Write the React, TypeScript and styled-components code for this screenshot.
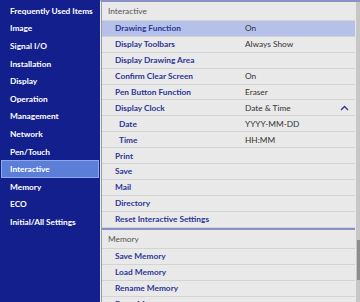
import styled, { createGlobalStyle } from "styled-components";

const Global = createGlobalStyle`
  html, body {
    margin: 0;
    padding: 0;
    overflow: hidden;
    background: #e9e9e9;
  }
  * { box-sizing: border-box; }
`;

const Screen = styled.div`
  width: 360px;
  height: 302px;
  display: flex;
  font-family: Lato, "Noto Sans", sans-serif;
  font-size: 8.3px;
  overflow: hidden;
`;

const Sidebar = styled.nav`
  width: 100px;
  flex: none;
  background: #141f8e;
  padding-top: 2px;
  display: flex;
  flex-direction: column;
`;

const NavItem = styled.div<{ $active?: boolean }>`
  height: 17.6px;
  margin: 0 1px;
  padding-left: 8px;
  display: flex;
  align-items: center;
  color: #fff;
  font-weight: 700;
  white-space: nowrap;
  background: ${(p) => (p.$active ? "#5b7ed8" : "transparent")};
  border: 1px solid ${(p) => (p.$active ? "#8ea6ea" : "transparent")};
`;

const Panel = styled.div`
  flex: 1;
  position: relative;
  border-top: 2px solid #8a90c8;
  border-left: 1px solid #f4f4f4;
  background: #e9e9e9;
  overflow: hidden;
`;

const List = styled.div`
  margin-right: 5px;
  border-left: 1px solid #9297cc;
  display: flex;
  flex-direction: column;
`;

const SectionHead = styled.div<{ $h: number; $line?: boolean }>`
  height: ${(p) => p.$h}px;
  flex: none;
  padding-left: 6px;
  display: flex;
  align-items: center;
  color: #555;
  font-weight: 400;
  border-top: ${(p) => (p.$line ? "2px solid #8a90c8" : "none")};
  border-bottom: 1px solid #d3d3d3;
`;

const Row = styled.div<{ $sel?: boolean; $h?: number }>`
  height: ${(p) => p.$h ?? 16}px;
  flex: none;
  display: flex;
  align-items: center;
  background: ${(p) => (p.$sel ? "#b5c1e8" : "transparent")};
  border-bottom: 1px solid #d3d3d3;
`;

const Label = styled.div<{ $sub?: boolean }>`
  width: 143px;
  padding-left: ${(p) => (p.$sub ? 17 : 13)}px;
  color: #2b3596;
  font-weight: 700;
  white-space: nowrap;
`;

const Value = styled.div`
  flex: 1;
  color: #333;
  font-weight: 400;
  white-space: nowrap;
`;

const Caret = styled.svg`
  width: 9px;
  height: 6px;
  margin-right: 6px;
`;

const Track = styled.div`
  position: absolute;
  right: 0;
  top: 0;
  bottom: 0;
  width: 4px;
  background: #c6c6c6;
`;

const Thumb = styled.div`
  position: absolute;
  right: 0;
  top: 238px;
  height: 40px;
  width: 3px;
  background: #8c8c8c;
`;

const nav = [
  "Frequently Used Items",
  "Image",
  "Signal I/O",
  "Installation",
  "Display",
  "Operation",
  "Management",
  "Network",
  "Pen/Touch",
  "Interactive",
  "Memory",
  "ECO",
  "Initial/All Settings",
];

type Item = { label: string; value?: string; sub?: boolean; caret?: boolean; sel?: boolean };

const interactive: Item[] = [
  { label: "Drawing Function", value: "On", sel: true },
  { label: "Display Toolbars", value: "Always Show" },
  { label: "Display Drawing Area" },
  { label: "Confirm Clear Screen", value: "On" },
  { label: "Pen Button Function", value: "Eraser" },
  { label: "Display Clock", value: "Date & Time", caret: true },
  { label: "Date", value: "YYYY-MM-DD", sub: true },
  { label: "Time", value: "HH:MM", sub: true },
  { label: "Print" },
  { label: "Save" },
  { label: "Mail" },
  { label: "Directory" },
  { label: "Reset Interactive Settings" },
];

const memory: Item[] = [
  { label: "Save Memory" },
  { label: "Load Memory" },
  { label: "Rename Memory" },
  { label: "Erase Memory" },
];

function renderRow(it: Item, h?: number) {
  return (
    <Row key={it.label} $sel={it.sel} $h={h}>
      <Label $sub={it.sub}>{it.label}</Label>
      <Value>{it.value}</Value>
      {it.caret && (
        <Caret viewBox="0 0 9 6">
          <polyline points="1,5 4.5,1.5 8,5" fill="none" stroke="#2b3596" strokeWidth="1.3" />
        </Caret>
      )}
    </Row>
  );
}

export default function App() {
  return (
    <Screen>
      <Global />
      <Sidebar>
        {nav.map((n) => (
          <NavItem key={n} $active={n === "Interactive"}>
            {n}
          </NavItem>
        ))}
      </Sidebar>
      <Panel>
        <List>
          <SectionHead $h={19}>Interactive</SectionHead>
          {interactive.map((it) => renderRow(it, 15.9))}
          <SectionHead $h={21} $line>
            Memory
          </SectionHead>
          {memory.map((it) => renderRow(it))}
        </List>
        <Track />
        <Thumb />
      </Panel>
    </Screen>
  );
}
